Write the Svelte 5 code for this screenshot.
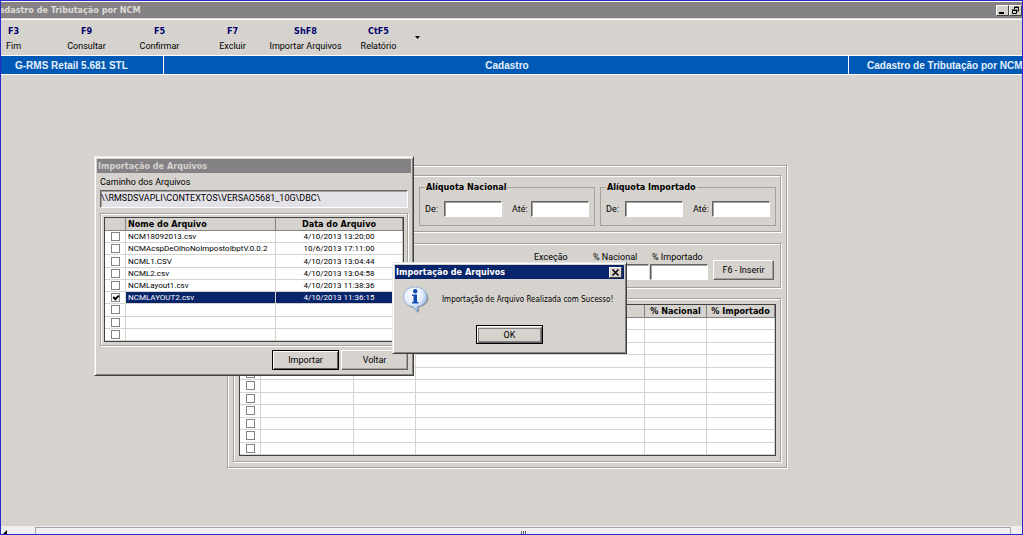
<script lang="ts">
    let path = "\\\\RMSDSVAPLI\\CONTEXTOS\\VERSAO5681_10G\\DBC\\";

    let actions = [
        {"key": "F3", "name": "Fim"},
        {"key": "F9", "name": "Consultar"},
        {"key": "F5", "name": "Confirmar"},
        {"key": "F7", "name": "Excluir"},
        {"key": "ShF8", "name": "Importar Arquivos"},
        {"key": "CtF5", "name": "Relatório"},
    ];

    let files = [
        {"name": "NCM18092013.csv", "date": "4/10/2013 13:20:00", "include": false},
        {"name": "NCMAcspDeOlhoNoImpostoIbptV.0.0.2", "date": "10/6/2013 17:11:00", "include": false},
        {"name": "NCML1.CSV", "date": "4/10/2013 13:04:44", "include": false},
        {"name": "NCML2.csv", "date": "4/10/2013 13:04:58", "include": false},
        {"name": "NCMLayout1.csv", "date": "4/10/2013 11:38:36", "include": false},
        {"name": "NCMLAYOUT2.csv", "date": "4/10/2013 11:36:15", "include": true},
        {"name": "", "date": "", "include": false},
        {"name": "", "date": "", "include": false},
        {"name": "", "date": "", "include": false},
    ];

    let rates = [
        {"id": "nacional", "title": "Alíquota Nacional"},
        {"id": "importado", "title": "Alíquota Importado"},
    ];

    let rows = Array.from({length: 11}, () => ({"include": false}));

    let showMessage = true;
    let showImport = true;
</script>

<div class="window">
    <header class="titlebar">
        <h1>Cadastro de Tributação por NCM</h1>
        <button class="caption" aria-label="Minimizar">
            <svg viewBox="0 0 11 9" width="11" height="9"><path d="M2 7h5" stroke="#000" stroke-width="2" /></svg>
        </button>
        <button class="caption" aria-label="Restaurar">
            <svg viewBox="0 0 11 9" width="11" height="9" fill="none" stroke="#000">
                <path d="M4.500 3v-2h4v4h-2M4 1.500h5M2.500 4.500h4v3h-4zM2 4h5" />
            </svg>
        </button>
    </header>

    <nav class="toolbar">
        {#each actions as { key, name }}
        <button class="action"><b>{key}</b><span>{name}</span></button>
        {/each}
        <button class="more" aria-label="Mais opções">
            <svg viewBox="0 0 5 3" width="5" height="3"><path d="M0 0h5l-2.500 3z" /></svg>
        </button>
    </nav>

    <div class="banner">
        <span>G-RMS Retail 5.681 STL</span>
        <span class="center">Cadastro</span>
        <span>Cadastro de Tributação por NCM</span>
    </div>

    <main class="workspace">
        <div class="panel etched">
            <div class="filters etched">
                {#each rates as { id, title }}
                <fieldset>
                    <legend>{title}</legend>
                    <label for="{id}-de">De:</label>
                    <input class="field" type="text" id="{id}-de">
                    <label class="until" for="{id}-ate">Até:</label>
                    <input class="field" type="text" id="{id}-ate">
                </fieldset>
                {/each}
            </div>

            <div class="entry etched">
                <div class="cell">
                    <label for="excecao">Exceção</label>
                    <input class="field" type="text" id="excecao">
                </div>
                <div class="cell">
                    <label for="pNacional">% Nacional</label>
                    <input class="field" type="text" id="pNacional">
                </div>
                <div class="cell">
                    <label for="pImportado">% Importado</label>
                    <input class="field" type="text" id="pImportado">
                </div>
                <button class="button insert">F6 - Inserir</button>
            </div>

            <div class="list etched">
                <table class="rates">
                    <colgroup>
                        <col class="w-check"><col class="w-code"><col class="w-ex"><col><col class="w-rate"><col class="w-last">
                    </colgroup>
                    <thead>
                        <tr><th></th><th></th><th></th><th></th><th>% Nacional</th><th>% Importado</th></tr>
                    </thead>
                    <tbody>
                        {#each rows as row, i}
                        <tr>
                            <td><input type="checkbox" aria-label="Linha {i + 1}" bind:checked={row.include}></td>
                            <td></td><td></td><td></td><td></td><td></td>
                        </tr>
                        {/each}
                    </tbody>
                </table>
            </div>
        </div>

        {#if showImport}
        <section class="dialog import" aria-labelledby="import-title">
            <h2 id="import-title">Importação de Arquivos</h2>
            <div class="body">
                <label for="path">Caminho dos Arquivos</label>
                <input class="field path" type="text" id="path" bind:value={path}>
                <div class="files-frame etched">
                    <table class="files">
                        <colgroup><col class="w-check"><col class="w-name"><col></colgroup>
                        <thead>
                            <tr><th></th><th class="left">Nome do Arquivo</th><th>Data do Arquivo</th></tr>
                        </thead>
                        <tbody>
                            {#each files as file, i}
                            <tr class:selected={file.include}>
                                <td><input type="checkbox" aria-label={file.name || "Arquivo " + (i + 1)} bind:checked={file.include}></td>
                                <td class="left">{file.name}</td>
                                <td>{file.date}</td>
                            </tr>
                            {/each}
                        </tbody>
                    </table>
                </div>
                <div class="buttons">
                    <button class="button default">Importar</button>
                    <button class="button" on:click={() => showImport = false}>Voltar</button>
                </div>
            </div>
        </section>
        {/if}

        {#if showMessage}
        <section class="dialog message" role="alertdialog" aria-labelledby="message-title">
            <h2 id="message-title" class="active">
                <span>Importação de Arquivos</span>
                <button class="caption" aria-label="Fechar" on:click={() => showMessage = false}>
                    <svg viewBox="0 0 11 9" width="11" height="9"><path d="M2.500 1.500l6 6M8.500 1.500l-6 6" stroke="#000" stroke-width="1.500" /></svg>
                </button>
            </h2>
            <div class="notice">
                <svg viewBox="0 0 28 28" width="28" height="28">
                    <defs>
                        <radialGradient id="bubble" cx=".4" cy=".3" r=".75">
                            <stop offset="0" stop-color="#fff" />
                            <stop offset=".55" stop-color="#e0ebfa" />
                            <stop offset="1" stop-color="#749fdf" />
                        </radialGradient>
                    </defs>
                    <path d="M14 3C7 3 3 7 3 12.500c0 5 4 9 9.500 9.500 1 1.500 2.500 3.500 4.500 5v-5.500c5-1 9.500-4.500 9.500-9.500C26.500 7 21 3 14 3z" fill="#666" opacity=".6" />
                    <path d="M13 1C6 1 1.500 5.500 1.500 11c0 5 4 9 9.500 9.800 1 1.500 2.500 3.500 4.500 5.200v-5.200c6-1 9.500-5 9.500-9.800C25 5.500 20 1 13 1z" fill="url(#bubble)" stroke="#7f9fcf" stroke-width=".7" />
                    <circle cx="13.200" cy="5.300" r="2.200" fill="#1249b4" />
                    <path d="M10 8.500h5v7.500h1.500v1.500H10V16h1.500v-6H10z" fill="#1249b4" />
                </svg>
                <p>Importação de Arquivo Realizada com Sucesso!</p>
            </div>
            <button class="button default ok" on:click={() => showMessage = false}><span>OK</span></button>
        </section>
        {/if}
    </main>

    <footer class="scrollbar">
        <svg viewBox="0 0 4 7" width="4" height="7"><path d="M4 0v7L0 4z" /></svg>
        <div class="thumb"><i></i><i></i><i></i></div>
    </footer>
</div>

<style>
    :global(body) {
        background: #d6d3ce;
    }

    .window {
        box-sizing: border-box;
        display: flex;
        flex-direction: column;
        height: 100vh;
        overflow: hidden;
        border: 1px solid #2a2ac8;
        background: #d6d3ce;
        color: #000;
        font-family: Roboto, "Liberation Sans", Arial, sans-serif;
        font-size: 9px;
        line-height: 12px;
    }

    .window button,
    .window input {
        box-sizing: border-box;
        margin: 0;
        padding: 0;
        font: inherit;
        color: inherit;
    }

    h1, h2, p {
        margin: 0;
    }

    .titlebar {
        display: flex;
        align-items: center;
        height: 16px;
        flex: none;
        border-top: 1px solid #fff;
        border-bottom: 1px solid #d6d3ce;
        background: #848284;
        color: #dedbd6;
    }

    .titlebar h1 {
        flex: 1;
        margin-left: -8px;
        font: bold 9px/14px "DejaVu Sans Condensed", "DejaVu Sans", sans-serif;
    }

    .caption {
        display: flex;
        align-items: center;
        justify-content: center;
        width: 13px;
        height: 11px;
        border: 1px solid;
        border-color: #fff #424142 #424142 #fff;
        background: #d6d3ce;
    }

    .toolbar {
        display: flex;
        height: 35px;
        flex: none;
        margin-left: -24px;
        border-top: 1px solid #fff;
        border-bottom: 1px solid #fff;
        line-height: 15px;
    }

    .toolbar button {
        border: 0;
        background: none;
    }

    .action {
        display: flex;
        flex-direction: column;
        align-items: center;
        width: 73px;
        white-space: nowrap;
    }

    .action b {
        margin-top: 4px;
        color: #00006b;
        font-family: "DejaVu Sans Condensed", "DejaVu Sans", sans-serif;
    }

    .more {
        display: flex;
        align-items: center;
        margin-left: 4px;
    }

    .banner {
        display: grid;
        grid-template-columns: 162fr 685fr 174fr;
        flex: none;
        border-bottom: 1px solid #fff;
        background: #005ab5;
        color: #e6f0fa;
        font: bold 10px/16px "Liberation Sans", Arial, sans-serif;
        white-space: nowrap;
    }

    .banner span {
        min-width: 0;
        padding: 2px 0 0 14px;
    }

    .banner span + span {
        padding-left: 18px;
        border-left: 1px solid #fff;
    }

    .banner .center.center {
        padding-left: 2px;
        text-align: center;
    }

    .workspace {
        position: relative;
        flex: 1;
        min-height: 0;
    }

    .etched {
        border: 1px solid #a5a29c;
        box-shadow: 1px 1px #fff, inset 1px 1px #fff;
    }

    .panel {
        margin: 90px 235px 0 226px;
        padding: 9px 5px 5px;
    }

    .filters {
        display: flex;
        justify-content: flex-end;
        gap: 5px;
        padding: 5px 4px;
        margin-bottom: 11px;
    }

    fieldset {
        box-sizing: border-box;
        display: flex;
        align-items: center;
        width: 175px;
        height: 45px;
        margin: 0;
        padding: 0 5px;
        border: 1px solid #a5a29c;
    }

    legend {
        padding: 0 1px;
        font: bold 9px/12px "DejaVu Sans Condensed", "DejaVu Sans", sans-serif;
    }

    fieldset label {
        width: 19px;
    }

    fieldset .until {
        margin-left: 10px;
    }

    .window .field {
        width: 58px;
        height: 16px;
        border: 1px solid;
        border-color: #636163 #fff #fff #636163;
        background: #fff;
        box-shadow: inset 1px 1px #a5a29c;
    }

    .entry {
        display: flex;
        justify-content: flex-end;
        align-items: flex-end;
        gap: 1px;
        height: 29px;
        padding: 7px 6px;
        margin-bottom: 10px;
    }

    .cell {
        display: flex;
        flex-direction: column;
        gap: 1px;
    }

    .cell label {
        padding-left: 2px;
    }

    .button {
        width: 67px;
        height: 20px;
        border: 1px solid;
        border-color: #fff #636163 #636163 #fff;
        background: #d6d3ce;
        box-shadow: inset -1px -1px #a5a29c;
    }

    .window .insert {
        width: 61px;
        margin-left: 4px;
    }

    .button.default {
        border-color: #000;
        box-shadow: inset 1px 1px #fff, inset -1px -1px #636163;
    }

    .list {
        padding: 5px 4px 5px 5px;
    }

    table {
        box-sizing: border-box;
        width: 100%;
        table-layout: fixed;
        border-collapse: separate;
        border-spacing: 0;
        border: 1px solid #424142;
        background: #fff;
        white-space: nowrap;
    }

    .rates {
        height: 152px;
    }

    .files {
        height: 125px;
    }

    .w-check {
        width: 21px;
    }

    .w-code {
        width: 93px;
    }

    .w-ex,
    .w-rate {
        width: 62px;
    }

    .w-last {
        width: 68px;
    }

    .w-name {
        width: 150px;
    }

    th {
        height: 12px;
        padding: 0;
        border-right: 1px solid #848284;
        border-bottom: 1px solid #848284;
        background: #d6d3ce;
        font: bold 9px/12px "DejaVu Sans Condensed", "DejaVu Sans", sans-serif;
    }

    td {
        height: 11px;
        padding: 0;
        border-right: 1px solid #d6d3ce;
        border-bottom: 1px solid #d6d3ce;
        text-align: center;
        font-size: 8px;
        line-height: 11px;
    }

    .left {
        padding-left: 2px;
        text-align: left;
    }

    .selected td {
        background: #08246b;
        color: #fff;
    }

    .selected td:first-child {
        background: #fff;
    }

    input[type="checkbox"] {
        display: block;
        appearance: none;
        width: 9px;
        height: 9px;
        border: 1px solid #848284;
        background: #fff;
    }

    .window td input[type="checkbox"] {
        margin: 0 auto;
    }

    input[type="checkbox"]:checked::after {
        content: "";
        display: block;
        width: 4px;
        height: 2px;
        margin: 1px;
        border: solid #000;
        border-width: 0 0 2px 2px;
        transform: rotate(-45deg);
    }

    .dialog {
        position: absolute;
        box-sizing: border-box;
        padding: 2px;
        border: 1px solid;
        border-color: #e7e7e7 #424142 #424142 #e7e7e7;
        background: #d6d3ce;
        box-shadow: inset 1px 1px #fff, inset -1px -1px #848284;
    }

    .dialog h2 {
        display: flex;
        align-items: center;
        justify-content: space-between;
        height: 14px;
        padding: 0 2px 0 1px;
        background: #848284;
        color: #d6d3ce;
        font: bold 9px/14px "DejaVu Sans Condensed", "DejaVu Sans", sans-serif;
    }

    .dialog h2.active {
        background: #08246b;
        color: #fff;
    }

    .import {
        left: 93px;
        top: 81px;
        width: 320px;
    }

    .body {
        display: flex;
        flex-direction: column;
        padding: 3px 3px 3px 3px;
    }

    .window .path {
        width: 100%;
        height: 18px;
        margin: 2px 0 5px;
        padding-bottom: 3px;
        background: #e4e1e8;
    }

    .files-frame {
        padding: 3px;
    }

    .buttons {
        display: flex;
        justify-content: flex-end;
        gap: 2px;
        margin-top: 4px;
    }

    .message {
        display: flex;
        flex-direction: column;
        left: 391px;
        top: 187px;
        width: 235px;
        height: 92px;
    }

    .notice {
        display: flex;
        gap: 12px;
        padding: 7px 7px 0;
    }

    .notice svg {
        flex: none;
    }

    .notice p {
        margin-top: 8px;
        white-space: nowrap;
        font: 8px/12px "DejaVu Sans Condensed", "DejaVu Sans", sans-serif;
    }

    .window .ok {
        align-self: center;
        height: 19px;
        margin-top: 11px;
    }

    .ok span {
        display: block;
        margin: 1px;
        border: 1px solid #848284;
    }

    .scrollbar {
        display: flex;
        gap: 28px;
        height: 8px;
        flex: none;
        padding-left: 2px;
        padding-right: 11px;
        background: #efefef;
    }

    .scrollbar svg {
        margin-top: 4px;
    }

    .thumb {
        flex: 1;
        display: flex;
        justify-content: center;
        gap: 1px;
        margin-top: 1px;
        padding-top: 3px;
        border: solid #a5a2a8;
        border-width: 1px 1px 0;
    }

    .thumb i {
        width: 1px;
        height: 5px;
        background: #636163;
    }
</style>
